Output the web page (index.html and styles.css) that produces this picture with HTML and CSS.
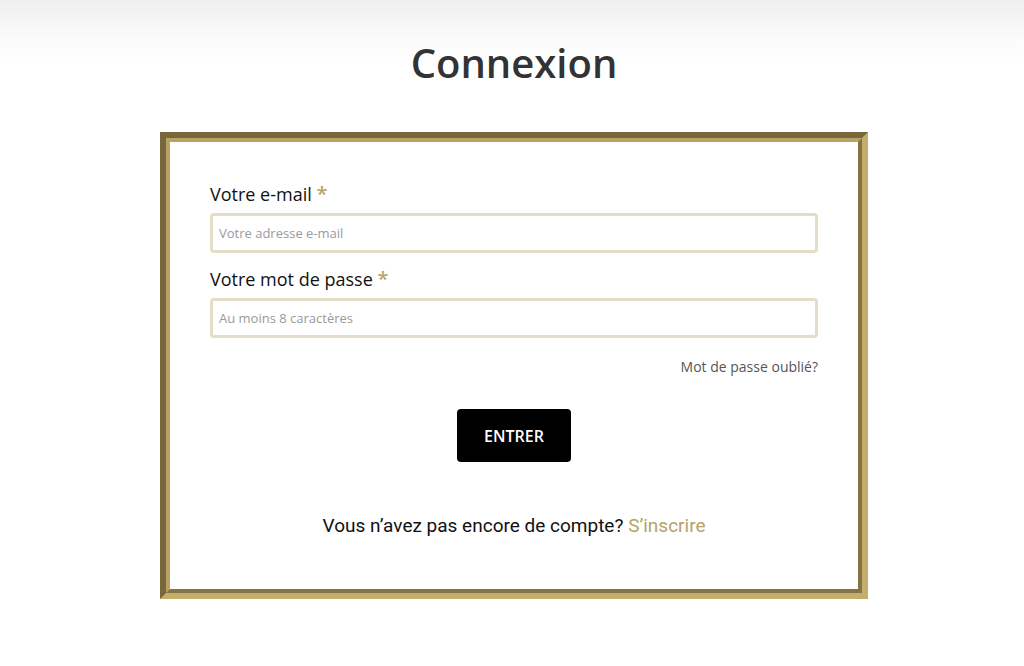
FILE: index.html
```html
<!DOCTYPE html>
<html lang="fr">

<head>
    <meta charset="UTF-8">
    <meta name="viewport" content="width=device-width, initial-scale=1.0">
    <title>Connexion</title>
    <link rel="stylesheet" href="styles.css">
</head>

<body>
    <div class="page">
        <h1>Connexion</h1>

        <div class="frame">
            <form class="login-form" onsubmit="return false;">
                <div class="field">
                    <label for="email">Votre e-mail <span class="required">*</span></label>
                    <input type="email" id="email" placeholder="Votre adresse e-mail">
                </div>

                <div class="field">
                    <label for="password">Votre mot de passe <span class="required">*</span></label>
                    <input type="password" id="password" placeholder="Au moins 8 caractères">
                </div>

                <div class="forgot">
                    <a href="#">Mot de passe oublié?</a>
                </div>

                <div class="actions">
                    <button type="submit" class="submit-btn">ENTRER</button>
                </div>

                <p class="signup">Vous n’avez pas encore de compte? <a href="#">S’inscrire</a></p>
            </form>
        </div>
    </div>
</body>

</html>
```

FILE: styles.css
```css
html,
body {
    margin: 0;
    padding: 0;
}

body {
    font-family: "Open Sans", Arial, sans-serif;
    background: linear-gradient(to bottom, #efefef 0px, #fbfbfb 40px, #ffffff 60px);
    min-height: 666px;
}

.page {
    display: flex;
    flex-direction: column;
    align-items: center;
    padding-left: 4px;
}

h1 {
    margin: 36px 0 0 0;
    font-size: 40px;
    line-height: 54px;
    font-weight: 600;
    color: #333333;
}

.frame {
    margin-top: 42px;
    width: 696px;
    border-style: solid;
    border-width: 6px;
    border-color: #77673a #c4ad6d #c4ad6d #77673a;
}

.login-form {
    background-color: white;
    border-style: solid;
    border-width: 4px;
    border-color: #b9a263 #877341 #877341 #b9a263;
    padding: 40px 40px 51px 40px;
}

.field {
    display: flex;
    flex-direction: column;
    gap: 7px;
    margin-bottom: 14px;
}

.field label {
    font-size: 18px;
    line-height: 24px;
    color: #111111;
}

.required {
    color: #bba566;
    font-size: 20px;
    font-weight: 600;
}

.field input {
    height: 40px;
    box-sizing: border-box;
    border: 3px solid #e4dec6;
    border-radius: 4px;
    padding: 0 6px;
    font-family: "Open Sans", Arial, sans-serif;
    font-size: 13px;
    outline: none;
}

.field input::placeholder {
    color: #9a9a9a;
}

.forgot {
    text-align: right;
    padding-top: 4px;
    line-height: 20px;
}

.forgot a {
    font-size: 14px;
    color: #555555;
    text-decoration: none;
}

.actions {
    display: flex;
    justify-content: center;
    margin-top: 32px;
}

.submit-btn {
    width: 114px;
    height: 53px;
    background-color: #000000;
    color: white;
    border: none;
    border-radius: 4px;
    font-family: "Open Sans", Arial, sans-serif;
    font-size: 16px;
    font-weight: 600;
    cursor: pointer;
}

.signup {
    margin: 52px 0 0 0;
    text-align: center;
    font-family: Roboto, Arial, sans-serif;
    font-size: 19px;
    line-height: 24px;
    color: #111111;
}

.signup a {
    color: #b5a267;
    text-decoration: none;
}
```
